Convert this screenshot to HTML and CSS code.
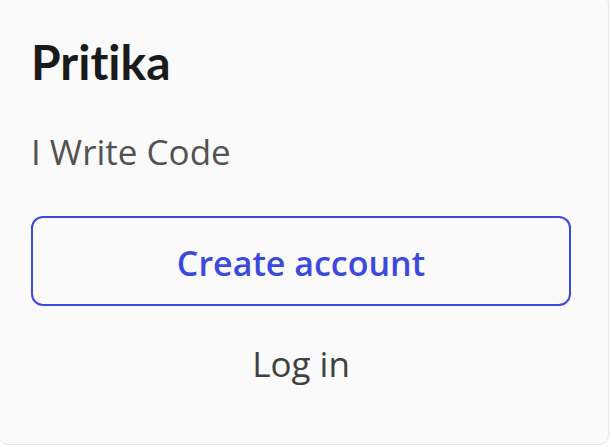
FILE: index.html
```html
<!DOCTYPE html>
<html lang="en">
<head>
<meta charset="utf-8">
<title>Pritika</title>
<link rel="stylesheet" href="styles.css">
</head>
<body>
<div class="card">
  <h2 class="name">Pritika</h2>
  <p class="tagline">I Write Code</p>
  <a class="btn-create" href="#">Create account</a>
  <a class="btn-login" href="#">Log in</a>
</div>
</body>
</html>
```

FILE: styles.css
```css
html, body {
  margin: 0;
  padding: 0;
  background: #ffffff;
}
body {
  font-family: "Open Sans", "Noto Sans", sans-serif;
}
.card {
  box-sizing: border-box;
  height: 451px;
  margin: -6px 2px 0 -2px;
  padding: 39px 37px 0 32px;
  background: #fafafa;
  border: 1px solid #e6e6e6;
  border-radius: 10px;
  display: flex;
  flex-direction: column;
}
.name {
  margin: 0;
  font-family: Lato, "Open Sans", sans-serif;
  font-variant-ligatures: none;
  font-feature-settings: "liga" 0, "clig" 0;
  font-size: 48px;
  line-height: 55px;
  font-weight: 700;
  color: #1a1a1a;
}
.tagline {
  margin: 37px 0 0;
  font-size: 35px;
  line-height: 52px;
  color: #525252;
}
.btn-create {
  margin-top: 38px;
  box-sizing: border-box;
  height: 90px;
  padding-top: 4px;
  border: 2px solid #3b49df;
  border-radius: 12px;
  display: flex;
  align-items: center;
  justify-content: center;
  font-size: 34px;
  font-weight: 600;
  color: #3b49df;
  text-decoration: none;
}
.btn-login {
  margin-top: 32px;
  text-align: center;
  font-size: 35px;
  line-height: 52px;
  color: #404040;
  text-decoration: none;
}
```
